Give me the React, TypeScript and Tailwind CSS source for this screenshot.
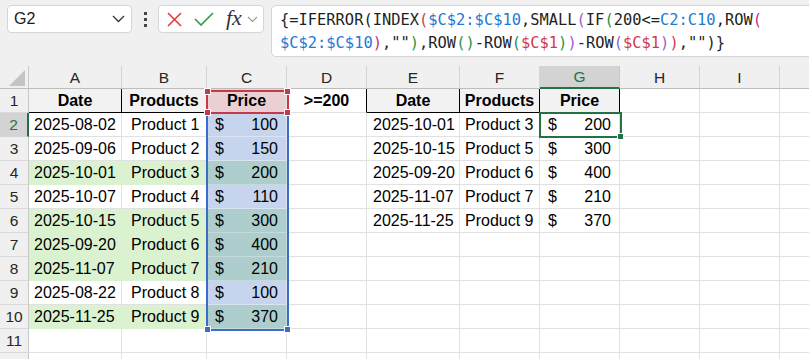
import React from "react";

const COLS = ["A", "B", "C", "D", "E", "F", "G", "H", "I", "J"];
const GREEN_ROWS = [4, 6, 7, 8, 10];

const LEFT: [string, string, number][] = [
  ["2025-08-02", "Product 1", 100],
  ["2025-09-06", "Product 2", 150],
  ["2025-10-01", "Product 3", 200],
  ["2025-10-07", "Product 4", 110],
  ["2025-10-15", "Product 5", 300],
  ["2025-09-20", "Product 6", 400],
  ["2025-11-07", "Product 7", 210],
  ["2025-08-22", "Product 8", 100],
  ["2025-11-25", "Product 9", 370],
];

const RIGHT: [string, string, number][] = [
  ["2025-10-01", "Product 3", 200],
  ["2025-10-15", "Product 5", 300],
  ["2025-09-20", "Product 6", 400],
  ["2025-11-07", "Product 7", 210],
  ["2025-11-25", "Product 9", 370],
];

const base =
  "h-[24px] border-r border-b flex items-center text-[16px] text-black whitespace-nowrap overflow-hidden";

function Money({ v }: { v: number }) {
  return (
    <div className="flex w-full justify-between px-[8px] pt-[1px]">
      <span>$</span>
      <span>{v}</span>
    </div>
  );
}

function Formula() {
  const blk = "text-[#1f1f1f]";
  const red = "text-[#d13b4b]";
  const blue = "text-[#1f7ad3]";
  const pur = "text-[#9b5fd0]";
  const grn = "text-[#2b9444]";
  const mag = "text-[#c8308a]";
  return (
    <div className="font-['DejaVu_Sans_Mono',monospace] text-[15.4px] leading-[23px] tracking-[0px]">
      <div className="whitespace-nowrap">
        <span className={blk}>{"{=IFERROR(INDEX"}</span>
        <span className={red}>(</span>
        <span className={blue}>$C$2:$C$10</span>
        <span className={blk}>,SMALL</span>
        <span className={pur}>(</span>
        <span className={blk}>IF</span>
        <span className={grn}>(</span>
        <span className={blk}>200&lt;=</span>
        <span className={blue}>C2:C10</span>
        <span className={blk}>,ROW</span>
        <span className={mag}>(</span>
      </div>
      <div className="whitespace-nowrap">
        <span className={blue}>$C$2:$C$10</span>
        <span className={mag}>)</span>
        <span className={blk}>,""</span>
        <span className={grn}>)</span>
        <span className={blk}>,ROW</span>
        <span className={grn}>()</span>
        <span className={blk}>-ROW</span>
        <span className={grn}>(</span>
        <span className={red}>$C$1</span>
        <span className={grn}>)</span>
        <span className={pur}>)</span>
        <span className={blk}>-ROW</span>
        <span className={pur}>(</span>
        <span className={red}>$C$1</span>
        <span className={pur}>)</span>
        <span className={red}>)</span>
        <span className={blk}>{',"")}'}</span>
      </div>
    </div>
  );
}

function Toolbar() {
  return (
    <div className="h-[66px] bg-[#f0f0f0] flex items-start pt-[5px] pl-[7px] overflow-hidden">
      <div className="w-[125px] h-[28px] shrink-0 bg-white border border-[#d6d6d6] rounded-[4px] flex items-center justify-between pl-[6px] pr-[6px]">
        <span className="text-[16px] text-[#1a1a1a] font-['Liberation_Sans',sans-serif]">G2</span>
        <svg width="13" height="8" viewBox="0 0 13 8">
          <polyline points="1,1 6.5,6.5 12,1" fill="none" stroke="#333" strokeWidth="1.3" />
        </svg>
      </div>
      <div className="w-[26px] h-[28px] shrink-0 flex flex-col items-center justify-center gap-[3px]">
        <div className="w-[3px] h-[3px] bg-[#444]" />
        <div className="w-[3px] h-[3px] bg-[#444]" />
        <div className="w-[3px] h-[3px] bg-[#444]" />
      </div>
      <div className="w-[106px] h-[28px] shrink-0 bg-white border border-[#d6d6d6] rounded-[4px] flex items-center pl-[8px]">
        <svg width="15" height="15" viewBox="0 0 15 15">
          <line x1="1" y1="1" x2="14" y2="14" stroke="#e5383b" strokeWidth="1.6" />
          <line x1="14" y1="1" x2="1" y2="14" stroke="#e5383b" strokeWidth="1.6" />
        </svg>
        <svg width="20" height="14" viewBox="0 0 20 14" className="ml-[12px]">
          <polyline points="1,7 7,13 19,1" fill="none" stroke="#3a9b4c" strokeWidth="1.7" />
        </svg>
        <span className="ml-[12px] text-[22px] leading-none italic font-['Liberation_Serif',serif] text-[#333] -mt-[3px]">
          fx
        </span>
        <svg width="11" height="7" viewBox="0 0 11 7" className="ml-[5px]">
          <polyline points="1,1 5.5,5.5 10,1" fill="none" stroke="#9a9a9a" strokeWidth="1.2" />
        </svg>
      </div>
      <div className="ml-[7px] w-[600px] h-[52px] shrink-0 bg-white border border-[#d6d6d6] rounded-[5px] pl-[8px] pt-[3px]">
        <Formula />
      </div>
    </div>
  );
}

function Sheet() {
  const cells: React.ReactNode[] = [];

  cells.push(
    <div
      key="corner"
      className="h-[23px] bg-[#f0f0f0] border-r border-b border-r-[#c8c8c8] border-b-[#bdbdbd] relative overflow-hidden"
    >
      <svg width="29" height="23" viewBox="0 0 29 23" className="absolute left-0 top-0">
        <polygon points="25,4 25,20 9,20" fill="#c4c4c4" />
      </svg>
    </div>
  );
  COLS.forEach((c) => {
    if (c === "G") {
      cells.push(
        <div
          key={"h" + c}
          className="h-[23px] bg-[#d3d3d3] border-r border-r-[#c8c8c8] border-b-2 border-b-[#217346] flex items-center justify-center text-[15.5px] text-[#217346] pt-[1px]"
        >
          {c}
        </div>
      );
    } else {
      cells.push(
        <div
          key={"h" + c}
          className="h-[23px] bg-[#f0f0f0] border-r border-b border-r-[#d4d4d4] border-b-[#bdbdbd] flex items-center justify-center text-[15.5px] text-[#262626] pt-[1px]"
        >
          {c === "J" ? "" : c}
        </div>
      );
    }
  });

  for (let r = 1; r <= 12; r++) {
    if (r === 2) {
      cells.push(
        <div
          key={"r" + r}
          className="h-[24px] bg-[#d3d3d3] border-r-2 border-b border-r-[#217346] border-b-[#d4d4d4] flex items-center justify-center text-[15.5px] text-[#217346]"
        >
          {r}
        </div>
      );
    } else {
      cells.push(
        <div
          key={"r" + r}
          className="h-[24px] bg-[#f0f0f0] border-r border-b border-r-[#c8c8c8] border-b-[#d9d9d9] flex items-center justify-center text-[15.5px] text-[#262626]"
        >
          {r <= 11 ? r : ""}
        </div>
      );
    }

    const green = GREEN_ROWS.includes(r);
    const L = r >= 2 && r <= 10 ? LEFT[r - 2] : null;
    const R = r >= 2 && r <= 6 ? RIGHT[r - 2] : null;

    COLS.forEach((c) => {
      const k = c + r;
      if (r === 1) {
        if (c === "A" || c === "B" || c === "E" || c === "F" || c === "G") {
          const label = c === "A" || c === "E" ? "Date" : c === "G" ? "Price" : "Products";
          cells.push(
            <div key={k} className={base + " bg-[#f2f2f2] border-black justify-center font-bold text-[15.5px] pt-[1px]"}>
              {label}
            </div>
          );
        } else if (c === "C") {
          cells.push(
            <div key={k} className={base + " bg-[#ebd0d3] border-[#e4e4e4] justify-center font-bold text-[15.5px] pt-[1px]"}>
              Price
            </div>
          );
        } else if (c === "D") {
          cells.push(
            <div key={k} className={base + " bg-white border-b-[#e1e1e1] border-r-black justify-center font-bold text-[15.5px] pt-[1px]"}>
              &gt;=200
            </div>
          );
        } else {
          cells.push(<div key={k} className={base + " bg-white border-[#e1e1e1]"} />);
        }
        return;
      }

      if (L && (c === "A" || c === "B" || c === "C")) {
        if (c === "A") {
          cells.push(
            <div
              key={k}
              className={
                base +
                (green ? " bg-[#daf2d0] border-[#daf2d0]" : " bg-white border-[#e1e1e1]") +
                " pl-[5px] pt-[1px]"
              }
            >
              {L[0]}
            </div>
          );
        } else if (c === "B") {
          cells.push(
            <div
              key={k}
              className={
                base +
                (green ? " bg-[#daf2d0] border-[#daf2d0]" : " bg-white border-[#e1e1e1]") +
                " pl-[9px] pt-[1px]"
              }
            >
              {L[1]}
            </div>
          );
        } else {
          cells.push(
            <div
              key={k}
              className={base + (green ? " bg-[#aecece] border-[#c5dada]" : " bg-[#c7d4ee] border-[#dbe2f2]")}
            >
              <Money v={L[2]} />
            </div>
          );
        }
        return;
      }

      if (R && (c === "E" || c === "F" || c === "G")) {
        if (c === "E") {
          cells.push(
            <div key={k} className={base + " bg-white border-[#e1e1e1] pl-[6px] pt-[1px]"}>
              {R[0]}
            </div>
          );
        } else if (c === "F") {
          cells.push(
            <div key={k} className={base + " bg-white border-[#e1e1e1] pl-[5px] pt-[1px]"}>
              {R[1]}
            </div>
          );
        } else {
          cells.push(
            <div key={k} className={base + " bg-white border-[#e1e1e1]"}>
              <Money v={R[2]} />
            </div>
          );
        }
        return;
      }

      cells.push(<div key={k} className={base + " bg-white border-[#e1e1e1]"} />);
    });
  }

  return (
    <div className="relative w-[809px] overflow-hidden">
      <div className="grid w-[860px] grid-cols-[29px_93px_85px_80px_80px_93px_80px_80px_80px_80px_80px] font-['Liberation_Sans',Arial,sans-serif]">
        {cells}
      </div>

      {/* C2:C10 blue reference border */}
      <div className="absolute left-[206px] top-[46px] w-[83px] h-[219px] border-2 border-[#3a6cc8] pointer-events-none" />
      <div className="absolute left-[204px] top-[260px] w-[7px] h-[7px] bg-[#3a6cc8] border border-white" />
      <div className="absolute left-[284px] top-[260px] w-[7px] h-[7px] bg-[#3a6cc8] border border-white" />

      {/* C1 red reference border */}
      <div className="absolute left-[206px] top-[24px] w-[83px] h-[24px] border-2 border-[#c43a4b] pointer-events-none" />
      <div className="absolute left-[204px] top-[22px] w-[7px] h-[7px] bg-[#c43a4b] border border-white" />
      <div className="absolute left-[284px] top-[22px] w-[7px] h-[7px] bg-[#c43a4b] border border-white" />
      <div className="absolute left-[204px] top-[43px] w-[7px] h-[7px] bg-[#c43a4b] border border-white" />
      <div className="absolute left-[284px] top-[43px] w-[7px] h-[7px] bg-[#c43a4b] border border-white" />

      {/* Active cell G2 */}
      <div className="absolute left-[539px] top-[46px] w-[83px] h-[26px] border-2 border-[#217346] pointer-events-none" />
      <div className="absolute left-[617px] top-[67px] w-[7px] h-[7px] bg-[#217346] border border-white" />
    </div>
  );
}

export default function App() {
  return (
    <div className="w-[809px] h-[359px] overflow-hidden bg-white">
      <Toolbar />
      <Sheet />
    </div>
  );
}
